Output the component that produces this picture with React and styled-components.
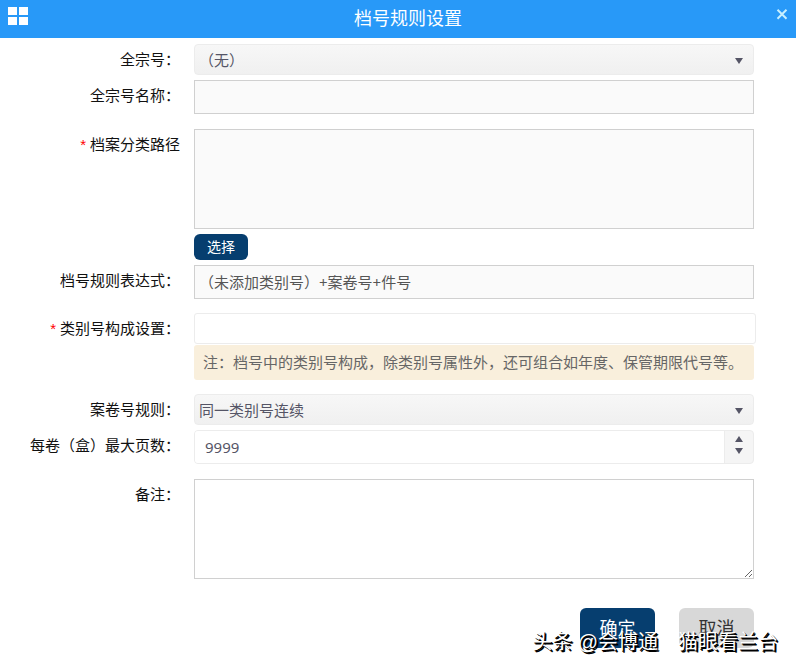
import React, { useState } from 'react';
import styled, { createGlobalStyle, css } from 'styled-components';

const GlobalStyle = createGlobalStyle`
  * {
    box-sizing: border-box;
  }
  body {
    margin: 0;
    background: #fff;
    color: #111;
    font-family: 'Noto Sans', 'Noto Sans CJK SC', sans-serif;
    font-size: 15px;
  }
  button,
  input,
  select,
  textarea {
    font: inherit;
    margin: 0;
  }
`;

const Dialog = styled.main`
  position: relative; /* anchor for the watermark */
  display: flex;
  flex-direction: column;
  padding-bottom: 22px;
`;

const Header = styled.header`
  display: grid;
  grid-template-columns: 20px 1fr 12px;
  align-items: start;
  height: 38px;
  padding: 0 8px;
  background: #2899f8;
  color: #fff;
`;

const Logo = styled.svg`
  margin-top: 7px;
`;

const Title = styled.h1`
  margin: 0;
  padding-left: 12px;
  font-size: 18px;
  font-weight: 400;
  line-height: 36px;
  text-align: center;
`;

const CloseButton = styled.button`
  display: flex;
  margin-top: 9px;
  padding: 0;
  border: 0;
  background: none;
  color: #c8f0ff;
  cursor: pointer;
`;

const Form = styled.form`
  display: flex;
  flex-direction: column;
  padding: 6px 42px 0 0;
`;

const Row = styled.div`
  display: grid;
  grid-template-columns: 180px 1fr;
  column-gap: 14px;
  margin-bottom: ${(props) => props.$gap || 5}px;
`;

const Label = styled.label`
  line-height: 31px;
  text-align: right;
  white-space: nowrap;
`;

const Required = styled.span`
  margin-right: 4px;
  color: #f00;
  font-family: 'Liberation Sans', sans-serif;
`;

const Field = styled.div`
  display: flex;
  flex-direction: column;
  align-items: stretch;
`;

const box = css`
  display: block;
  width: 100%;
  border: 1px solid #d0d0d0;
  border-radius: 0;
  background: ${(props) => (props.readOnly ? '#fafafa' : '#fff')};
  color: #555;
  outline: none;
`;

const TextInput = styled.input`
  ${box}
  height: 34px;
  padding: 0 4px 2px;
`;

const TextArea = styled.textarea`
  ${box}
  height: 100px;
  padding: 4px;
  resize: ${(props) => (props.readOnly ? 'none' : 'both')};
`;

/* sticks out 2px past the other fields */
const TagInput = styled.input`
  width: calc(100% + 2px);
  height: 31px;
  padding: 0 5px;
  border: 1px solid #ececec;
  border-radius: 3px;
  outline: none;
`;

const Note = styled.p`
  margin: 1px 0 0;
  padding: 0 9px;
  border-radius: 3px;
  background: #f9efdc;
  color: #666;
  line-height: 35px;
`;

const SelectBox = styled.div`
  position: relative;
`;

const Select = styled.select`
  display: block;
  width: 100%;
  height: 31px;
  padding: 0 30px 0 4px;
  appearance: none;
  border: 1px solid #ececec;
  border-radius: 4px;
  background: linear-gradient(#f7f7f7, #f0f0f0);
  color: #555566;
  outline: none;
`;

const Arrow = styled.span`
  display: block;
  width: 0;
  height: 0;
  border: 4px solid transparent;
  ${(props) =>
    props.$up
      ? 'border-top: 0; border-bottom: 6px solid #555566;'
      : 'border-bottom: 0; border-top: 6px solid #555566;'}
`;

const SelectArrow = styled(Arrow)`
  position: absolute;
  top: 14px;
  right: 11px;
  pointer-events: none;
`;

const Spinner = styled.div`
  display: flex;
  height: 34px;
  border: 1px solid #ececec;
  border-radius: 4px;
  background: #f5f5f5;
  overflow: hidden;
`;

const SpinnerInput = styled.input`
  flex: 1;
  min-width: 0;
  padding: 0 10px;
  border: 0;
  border-right: 1px solid #ececec;
  color: #555566;
  outline: none;
`;

const SpinnerButtons = styled.div`
  display: flex;
  flex-direction: column;
  justify-content: center;
  width: 28px;
  padding-bottom: 4px;
`;

const SpinnerButton = styled.button`
  display: flex;
  align-items: center;
  justify-content: center;
  height: 12px;
  padding: 0;
  border: 0;
  background: none;
`;

const Button = styled.button`
  height: 40px;
  min-width: 75px;
  padding: 0 0 2px;
  border: 0;
  border-radius: 6px;
  background: ${(props) => (props.$primary ? '#063e6f' : '#d8d8d8')};
  color: ${(props) => (props.$primary ? '#fff' : '#333')};
  font-size: 18px;
  cursor: pointer;
`;

const PickButton = styled(Button)`
  align-self: flex-start;
  height: 26px;
  min-width: 54px;
  margin-top: 5px;
  font-size: 14px;
`;

const Actions = styled.div`
  display: flex;
  justify-content: flex-end;
  gap: 24px;
  padding-top: 14px;
`;

const Watermark = styled.div`
  position: absolute;
  right: 18px;
  bottom: 13px;
  color: #fff;
  font-family: 'Liberation Sans', 'Noto Sans CJK SC', sans-serif;
  font-size: 20px;
  line-height: 30px;
  text-shadow: 1px 1px 0 #000, 2px 2px 0 #000;
  white-space: pre;
  pointer-events: none;
`;

function App() {
  const [pages, setPages] = useState(9999);

  return (
    <>
      <GlobalStyle />
      <Dialog>
        <Header>
          <Logo width="20" height="19" viewBox="0 0 20 19" fill="#fff" aria-hidden="true">
            <path d="M0 0h9v8H0zM11 0h9v8h-9zM0 10h9v8H0zM11 10h9v8h-9z" />
          </Logo>
          <Title>档号规则设置</Title>
          <CloseButton type="button" aria-label="关闭">
            <svg width="12" height="11" viewBox="0 0 12 11" stroke="currentColor" strokeWidth="2">
              <path d="M1.5 0.8L10.5 9.8M10.5 0.8L1.5 9.8" />
            </svg>
          </CloseButton>
        </Header>
        <Form onSubmit={(e) => e.preventDefault()}>
          <Row>
            <Label htmlFor="fonds">全宗号：</Label>
            <SelectBox>
              <Select id="fonds">
                <option>（无）</option>
              </Select>
              <SelectArrow />
            </SelectBox>
          </Row>
          <Row $gap={15}>
            <Label htmlFor="fondsName">全宗号名称：</Label>
            <TextInput id="fondsName" readOnly />
          </Row>
          <Row>
            <Label htmlFor="path">
              <Required>*</Required>档案分类路径
            </Label>
            <Field>
              <TextArea id="path" readOnly />
              <PickButton type="button" $primary>选择</PickButton>
            </Field>
          </Row>
          <Row $gap={14}>
            <Label htmlFor="expression">档号规则表达式：</Label>
            <TextInput id="expression" readOnly defaultValue="（未添加类别号）+案卷号+件号" />
          </Row>
          <Row $gap={14}>
            <Label htmlFor="category">
              <Required>*</Required>类别号构成设置：
            </Label>
            <Field>
              <TagInput id="category" />
              <Note>注：档号中的类别号构成，除类别号属性外，还可组合如年度、保管期限代号等。</Note>
            </Field>
          </Row>
          <Row>
            <Label htmlFor="volumeRule">案卷号规则：</Label>
            <SelectBox>
              <Select id="volumeRule">
                <option>同一类别号连续</option>
              </Select>
              <SelectArrow />
            </SelectBox>
          </Row>
          <Row $gap={15}>
            <Label htmlFor="maxPages">每卷（盒）最大页数：</Label>
            <Spinner>
              <SpinnerInput
                id="maxPages"
                value={pages}
                onChange={(e) => setPages(Number(e.target.value) || 0)}
              />
              <SpinnerButtons>
                <SpinnerButton type="button" aria-label="增加" onClick={() => setPages(pages + 1)}>
                  <Arrow $up />
                </SpinnerButton>
                <SpinnerButton type="button" aria-label="减少" onClick={() => setPages(pages - 1)}>
                  <Arrow />
                </SpinnerButton>
              </SpinnerButtons>
            </Spinner>
          </Row>
          <Row $gap={15}>
            <Label htmlFor="remark">备注：</Label>
            <TextArea id="remark" />
          </Row>
          <Actions>
            <Button type="submit" $primary>确定</Button>
            <Button type="button">取消</Button>
          </Actions>
        </Form>
        <Watermark>头条 @会博通　猫眼看兰台</Watermark>
      </Dialog>
    </>
  );
}

export default App;
